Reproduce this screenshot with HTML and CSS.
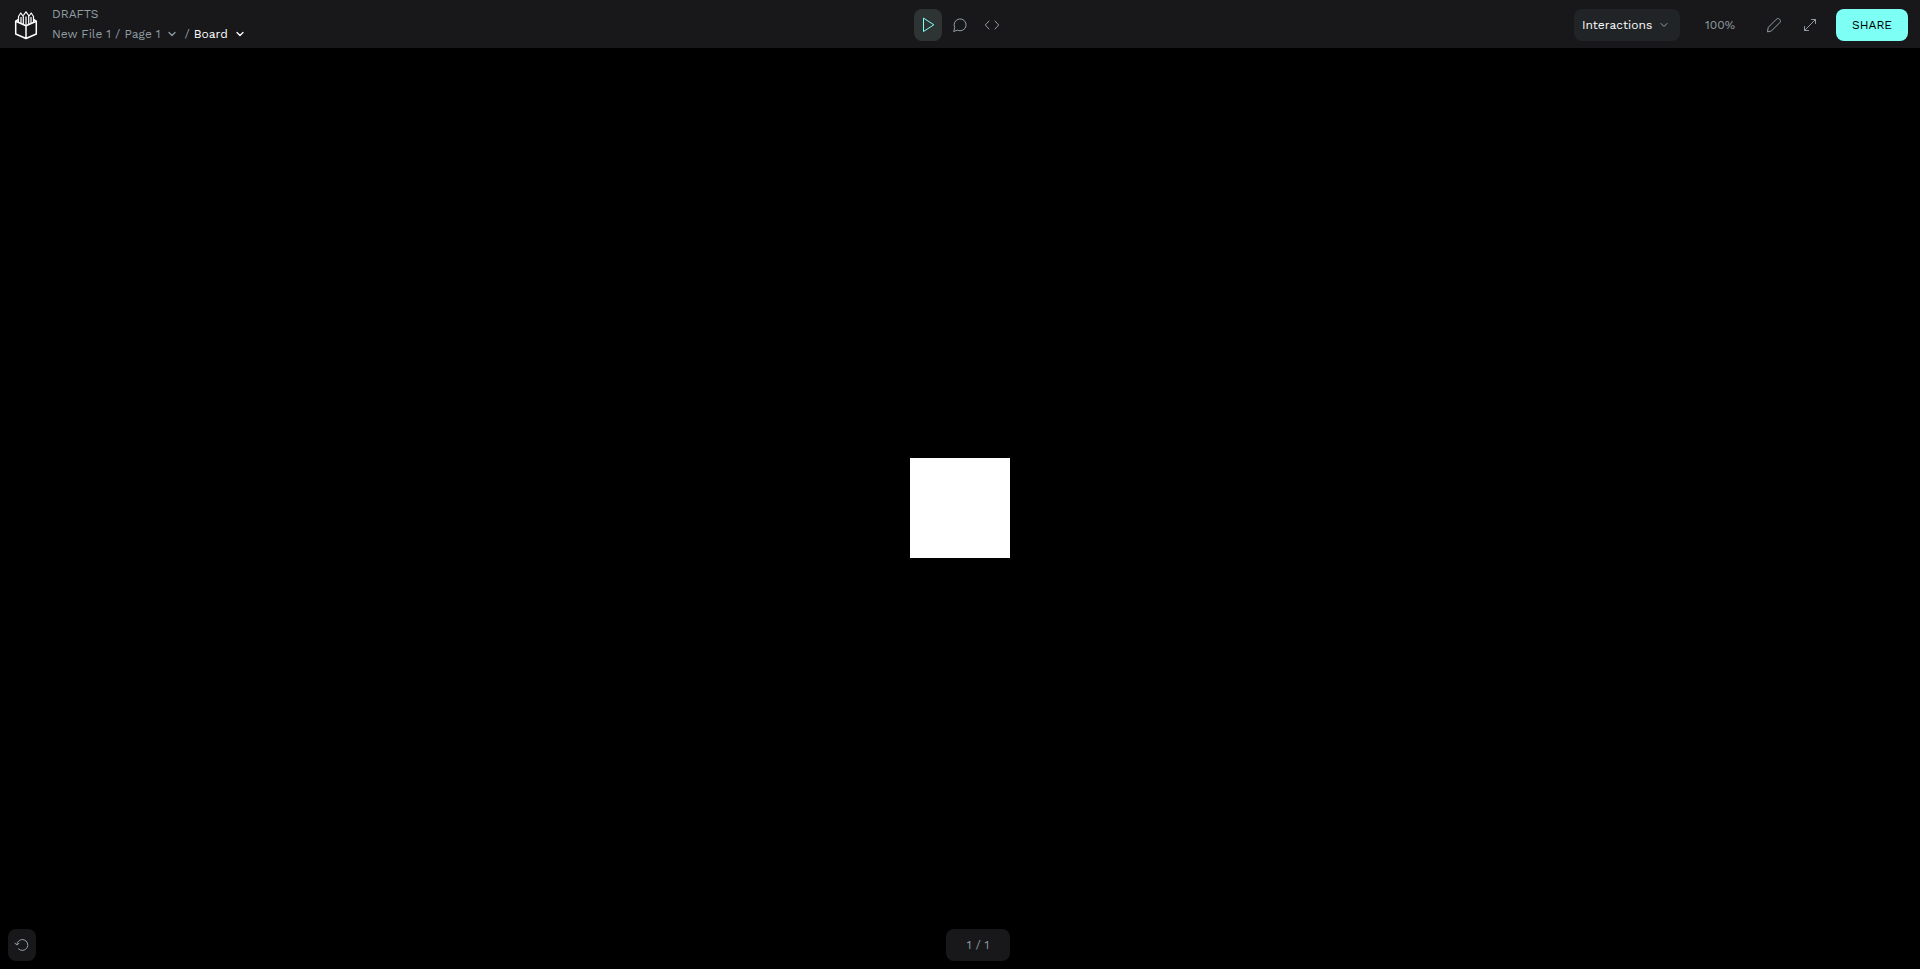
FILE: index.html
```html
<!DOCTYPE html>
<html lang="en">
<head>
<meta charset="utf-8">
<title>New File 1 - View mode</title>
<link rel="stylesheet" href="styles.css">
</head>
<body>
<div class="viewer">
  <header class="topbar">
    <div class="nav">
      <a class="logo" href="#" aria-label="Home">
        <svg width="24" height="30" viewBox="0 0 24 30" fill="none" stroke="#fff" stroke-width="1.500" stroke-linejoin="round">
          <path d="M4.500 9.500 1.700 11.200V24L12 28.500 22.300 24V11.200L19.500 9.500M1.700 11.200 12 15.800 22.300 11.200M12 15.800V28"/>
          <path stroke-width="1.200" d="M4.500 12V6.500L6.800 3 9.300 6.500V14M9.300 5.500 12 1.800 14.700 5.500V14M14.700 6.500 17.200 3 19.500 6.500V12M7 7V13M12 6.500V15.500M17 7V13"/>
        </svg>
      </a>
      <div class="crumbs">
        <a class="project" href="#">DRAFTS</a>
        <div class="path">
          <button class="crumb" type="button">New File 1 / Page 1
            <svg class="icon" viewBox="0 0 16 16"><path d="m5 6.500 3 3 3-3"/></svg>
          </button>
          <span>/</span>
          <button class="crumb current" type="button">Board
            <svg class="icon" viewBox="0 0 16 16"><path d="m5 6.500 3 3 3-3"/></svg>
          </button>
        </div>
      </div>
    </div>
    <nav class="modes">
      <button class="tool active" type="button" aria-label="View mode"><svg class="icon" viewBox="0 0 16 16"><path d="M3.500 1.500v13L13.500 8Z"/></svg></button>
      <button class="tool" type="button" aria-label="Comments"><svg class="icon" viewBox="0 0 16 16"><path d="M1.800 14.200 2.700 10.500A6 6 0 1 1 5.500 13.300Z"/></svg></button>
      <button class="tool" type="button" aria-label="Inspect"><svg class="icon" viewBox="0 0 16 16"><path d="M5 4 1.300 8 5 12M11 4l3.700 4L11 12"/></svg></button>
    </nav>
    <div class="options">
      <button class="interactions" type="button">Interactions
        <svg class="icon" viewBox="0 0 16 16"><path d="m5 6.500 3 3 3-3"/></svg>
      </button>
      <button class="zoom" type="button">100%</button>
      <div class="tools">
        <button class="tool" type="button" aria-label="Edit file"><svg class="icon" viewBox="0 0 16 16"><path d="M1.500 14.500 2.300 10.300 10.300 2.300C12.500 0 16 3.500 13.700 5.700L5.700 13.700Z"/></svg></button>
        <button class="tool" type="button" aria-label="Full screen"><svg class="icon" viewBox="0 0 16 16"><path d="M2.500 13.500 13.500 2.500M9.500 2.500h4v4M2.500 9.500v4h4"/></svg></button>
      </div>
      <button class="share" type="button">SHARE</button>
    </div>
  </header>
  <main class="stage">
    <div class="board"></div>
    <div class="controls">
      <button class="reset" type="button" aria-label="Reset"><svg class="icon" viewBox="0 0 16 16"><path d="M2.800 7.500A5.500 5.500 0 1 1 4.500 12M.8 6 2.800 8 5 6.300"/></svg></button>
      <span class="counter">1 / 1</span>
    </div>
  </main>
</div>
</body>
</html>
```
FILE: styles.css
```css
* {
  box-sizing: border-box;
}

body {
  margin: 0;
  background: #000;
  color: #8f9da3;
  font: 12px/16px "Work Sans", Inter, sans-serif;
}

button {
  margin: 0;
  padding: 0;
  border: 0;
  background: none;
  color: inherit;
  font: inherit;
  cursor: pointer;
}

a {
  color: inherit;
  text-decoration: none;
}

.icon {
  flex: none;
  width: 16px;
  height: 16px;
  fill: none;
  stroke: currentColor;
  stroke-linecap: round;
  stroke-linejoin: round;
}

.viewer {
  display: flex;
  flex-direction: column;
  height: 100vh;
  overflow: hidden;
}

.topbar {
  display: grid;
  grid-template-columns: 1fr auto 1fr;
  align-items: center;
  height: 48px;
  padding: 2px 12px 0;
  background: #18181a;
}

.nav {
  display: flex;
  align-items: center;
  gap: 14px;
  padding-left: 2px;
}

.logo,
.logo svg {
  display: block;
}

.crumbs {
  display: flex;
  flex-direction: column;
  gap: 4px;
  padding-bottom: 2px;
}

.path {
  display: flex;
  gap: 4px;
}

.crumb {
  display: flex;
  align-items: center;
  gap: 4px;
}

.crumb .icon {
  stroke-width: 1.3;
}

.current {
  color: #fff;
}

.modes {
  display: flex;
  gap: 4px;
}

.tool,
.reset {
  display: flex;
  align-items: center;
  justify-content: center;
  width: 28px;
  height: 32px;
  border-radius: 8px;
}

.active {
  background: #2e3434;
  color: #7efff5;
}

.options {
  display: flex;
  align-items: center;
  justify-content: flex-end;
  gap: 12px;
}

.interactions {
  display: flex;
  align-items: center;
  justify-content: space-between;
  width: 106px;
  height: 32px;
  padding: 0 8px;
  border-radius: 8px;
  background: #212426;
  color: #fff;
}

.interactions .icon {
  color: #8f9da3;
}

.zoom {
  width: 56px;
  height: 32px;
}

.tools {
  display: flex;
  gap: 8px;
}

.share {
  height: 32px;
  width: 72px;
  border-radius: 8px;
  background: #7efff5;
  color: #000;
}

.stage {
  position: relative;
  display: flex;
  flex: 1;
  align-items: center;
  justify-content: center;
  padding-bottom: 1px;
}

.board {
  width: 100px;
  height: 100px;
  background: #fff;
}

.controls {
  position: absolute;
  right: 8px;
  bottom: 8px;
  left: 8px;
  display: grid;
  grid-template-columns: 1fr 100px 1fr;
}

.reset {
  background: #18181a;
}

.counter {
  justify-self: end;
  width: 64px;
  border-radius: 8px;
  background: #18181a;
  line-height: 32px;
  text-align: center;
}
```
